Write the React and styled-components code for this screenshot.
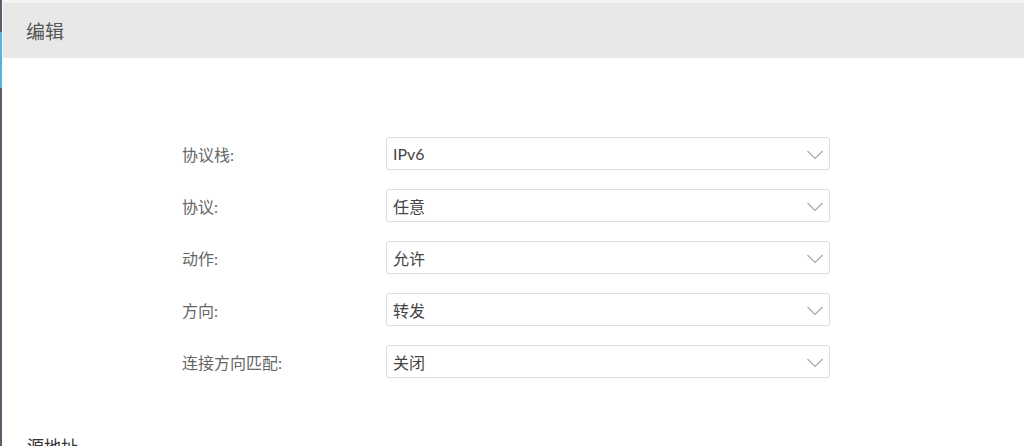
import React from "react";
import styled, { createGlobalStyle } from "styled-components";

const Global = createGlobalStyle`
  html, body { margin: 0; padding: 0; background: #fff; }
  body { font-family: Lato, "Noto Sans CJK SC", "Noto Sans", sans-serif; overflow: hidden; }
  * { box-sizing: border-box; }
`;

const Page = styled.div`
  display: flex;
  width: 1024px;
  height: 446px;
  overflow: hidden;
`;

const EdgeStrip = styled.div`
  width: 2px;
  flex: none;
  background: linear-gradient(
    to bottom,
    #56606b 0px,
    #56606b 32px,
    #5aaee6 32px,
    #5aaee6 88px,
    #56606b 88px
  );
`;

const Main = styled.div`
  flex: 1;
  display: flex;
  flex-direction: column;
  padding-top: 3px;
  padding-left: 1px;
  background: #fff;
  box-shadow: inset 0 3px 0 #f3f3f3;
`;

const Header = styled.div`
  height: 55px;
  background: #e8e8e8;
  display: flex;
  align-items: center;
  padding-left: 23px;
  font-size: 19px;
  color: #555;
  flex: none;
`;

const Form = styled.div`
  display: flex;
  flex-direction: column;
  gap: 19px;
  padding: 79px 0 0 179px;
`;

const Row = styled.div`
  display: flex;
  align-items: center;
  height: 33px;
`;

const Label = styled.div`
  width: 204px;
  font-size: 16px;
  color: #666;
`;

const Select = styled.div`
  width: 444px;
  height: 33px;
  border: 1px solid #dcdcdc;
  border-radius: 3px;
  display: flex;
  align-items: center;
  justify-content: space-between;
  padding: 0 4px 0 6px;
  font-size: 16px;
  color: #444;
  background: #fff;
`;

const Chevron = styled.svg`
  width: 20px;
  height: 20px;
  color: #a8a8a8;
`;

const SectionTitle = styled.div`
  margin-top: 55px;
  padding-left: 24px;
  font-size: 17px;
  color: #333;
`;

const rows = [
  ["协议栈:", "IPv6"],
  ["协议:", "任意"],
  ["动作:", "允许"],
  ["方向:", "转发"],
  ["连接方向匹配:", "关闭"],
];

export default function App() {
  return (
    <>
      <Global />
      <Page>
        <EdgeStrip />
        <Main>
          <Header>编辑</Header>
          <Form>
            {rows.map(([label, value]) => (
              <Row key={label}>
                <Label>{label}</Label>
                <Select>
                  <span>{value}</span>
                  <Chevron viewBox="0 0 20 20" fill="none">
                    <path d="M2.5 7l7.5 7.5 7.5-7.5" stroke="currentColor" strokeWidth="1.2" />
                  </Chevron>
                </Select>
              </Row>
            ))}
          </Form>
          <SectionTitle>源地址</SectionTitle>
        </Main>
      </Page>
    </>
  );
}
